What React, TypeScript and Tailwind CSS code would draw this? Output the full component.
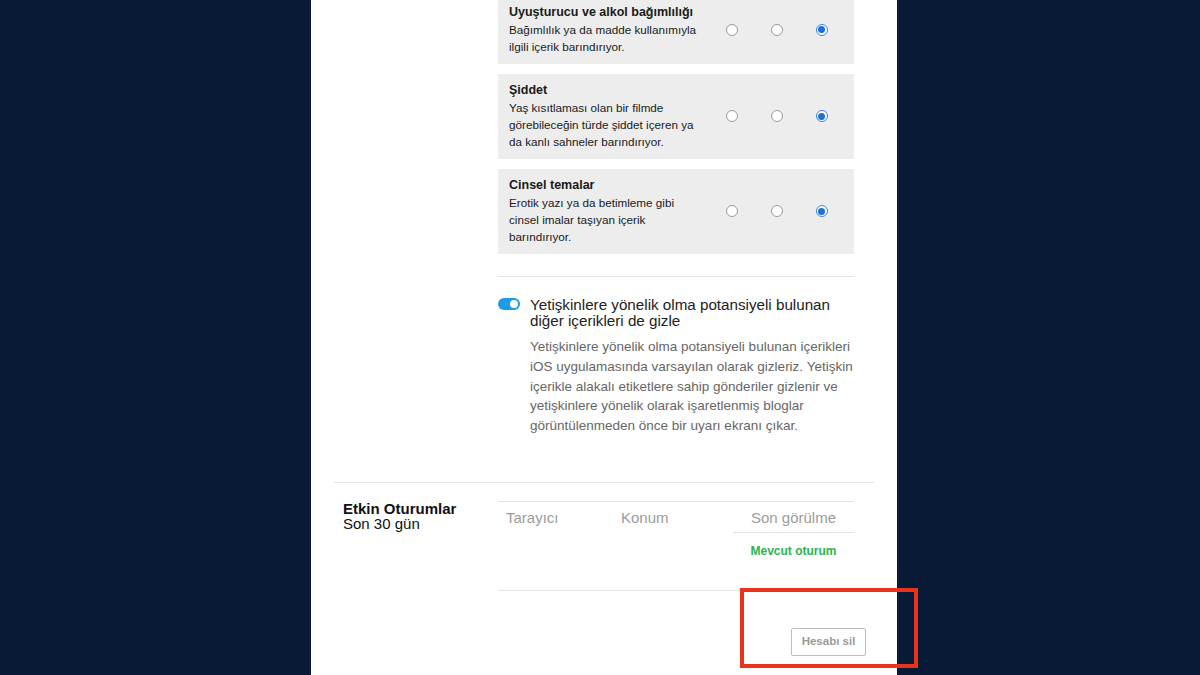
import React from "react";

const FONT = { fontFamily: '"Liberation Sans", Arial, sans-serif' };

type Filter = { title: string; lines: string[] };

const filters: Filter[] = [
  {
    title: "Uyuşturucu ve alkol bağımlılığı",
    lines: ["Bağımlılık ya da madde kullanımıyla", "ilgili içerik barındırıyor."],
  },
  {
    title: "Şiddet",
    lines: ["Yaş kısıtlaması olan bir filmde", "görebileceğin türde şiddet içeren ya", "da kanlı sahneler barındırıyor."],
  },
  {
    title: "Cinsel temalar",
    lines: ["Erotik yazı ya da betimleme gibi", "cinsel imalar taşıyan içerik", "barındırıyor."],
  },
];

const adultInfo = [
  "Yetişkinlere yönelik olma potansiyeli bulunan içerikleri",
  "iOS uygulamasında varsayılan olarak gizleriz. Yetişkin",
  "içerikle alakalı etiketlere sahip gönderiler gizlenir ve",
  "yetişkinlere yönelik olarak işaretlenmiş bloglar",
  "görüntülenmeden önce bir uyarı ekranı çıkar.",
];

function Radio({ checked }: { checked?: boolean }) {
  if (checked) {
    return (
      <span className="flex h-[12px] w-[12px] items-center justify-center rounded-full border border-[#3a86e0] bg-white">
        <span className="h-[7px] w-[7px] rounded-full bg-[#1f6fd8]" />
      </span>
    );
  }
  return <span className="block h-[12px] w-[12px] rounded-full border border-[#9a9a9a] bg-white" />;
}

function FilterBox({ f, first }: { f: Filter; first?: boolean }) {
  return (
    <div className={`flex items-center bg-[#ededed] pl-[11px] pt-[8px] pb-[9px] ${first ? "-mt-[4px]" : "mt-[10px]"}`}>
      <div className="w-[200px] flex-none text-[#1a1a1a]">
        <div className="text-[12.5px] font-bold leading-[17px]">{f.title}</div>
        {f.lines.map((l) => (
          <div key={l} className="text-[11.7px] leading-[17px] whitespace-nowrap">
            {l}
          </div>
        ))}
      </div>
      <div className="flex w-[45px] justify-center">
        <Radio />
      </div>
      <div className="flex w-[45px] justify-center">
        <Radio />
      </div>
      <div className="flex w-[45px] justify-center">
        <Radio checked />
      </div>
    </div>
  );
}

export default function App() {
  return (
    <div className="relative h-[675px] w-[1200px] overflow-hidden bg-[#081a36]" style={FONT}>
      {/* White settings panel */}
      <div className="ml-[311px] h-full w-[586px] bg-white px-[23px]">
        {/* Content filters */}
        <div className="flex">
          <div className="w-[164px] flex-none" />
          <div className="w-[356px] flex-none">
            {filters.map((f, i) => (
              <FilterBox key={f.title} f={f} first={i === 0} />
            ))}

            <div className="mt-[22px] border-t border-[#e3e3e3]" />

            <div className="flex pt-[20px]">
              <div className="w-[32px] flex-none pt-[1px]">
                <span className="relative block h-[12px] w-[22px] rounded-full bg-[#1f9be6]">
                  <span className="absolute right-[2px] top-[2px] h-[8px] w-[8px] rounded-full bg-white" />
                </span>
              </div>
              <div className="w-[324px]">
                <div className="text-[15.2px] leading-[16px] text-[#222]">
                  Yetişkinlere yönelik olma potansiyeli bulunan diğer içerikleri de gizle
                </div>
                <div className="mt-[8px] text-[13.5px] leading-[19.8px] text-[#666]">
                  {adultInfo.map((l) => (
                    <div key={l} className="whitespace-nowrap">
                      {l}
                    </div>
                  ))}
                </div>
              </div>
            </div>
          </div>
        </div>

        <div className="mt-[46px] border-t border-[#e6e6e6]" />

        {/* Active sessions */}
        <div className="flex pt-[18px]">
          <div className="w-[164px] flex-none pl-[9px] text-[15px] leading-[15px] text-[#111]">
            <div className="font-bold">Etkin Oturumlar</div>
            <div>Son 30 gün</div>
          </div>
          <div className="w-[356px] flex-none border-t border-[#e3e3e3]">
            <div className="flex h-[31px] items-center pt-[2px] text-[15px] text-[#9c9c9c]">
              <div className="w-[115px] pl-[8px]">Tarayıcı</div>
              <div className="w-[120px] pl-[8px]">Konum</div>
              <div className="flex h-full flex-1 items-center justify-center border-b border-[#e3e3e3]">Son görülme</div>
            </div>
            <div className="flex h-[58px] border-b border-[#e3e3e3]">
              <div className="w-[235px]" />
              <div className="flex-1 pt-[11px] text-center text-[12px] font-bold leading-[14px] text-[#2ab54c]">
                Mevcut oturum
              </div>
            </div>
          </div>
        </div>

        <div className="flex justify-end pr-[8px] pt-[37px]">
          <button className="h-[28px] w-[75px] rounded-[2px] border border-[#bdbdbd] bg-white text-[11.5px] font-bold text-[#9a9a9a]">
            Hesabı sil
          </button>
        </div>
      </div>

      {/* Red annotation box */}
      <div className="absolute left-[740px] top-[588px] h-[80px] w-[178px] border-[4px] border-[#e8341c]" />
    </div>
  );
}
